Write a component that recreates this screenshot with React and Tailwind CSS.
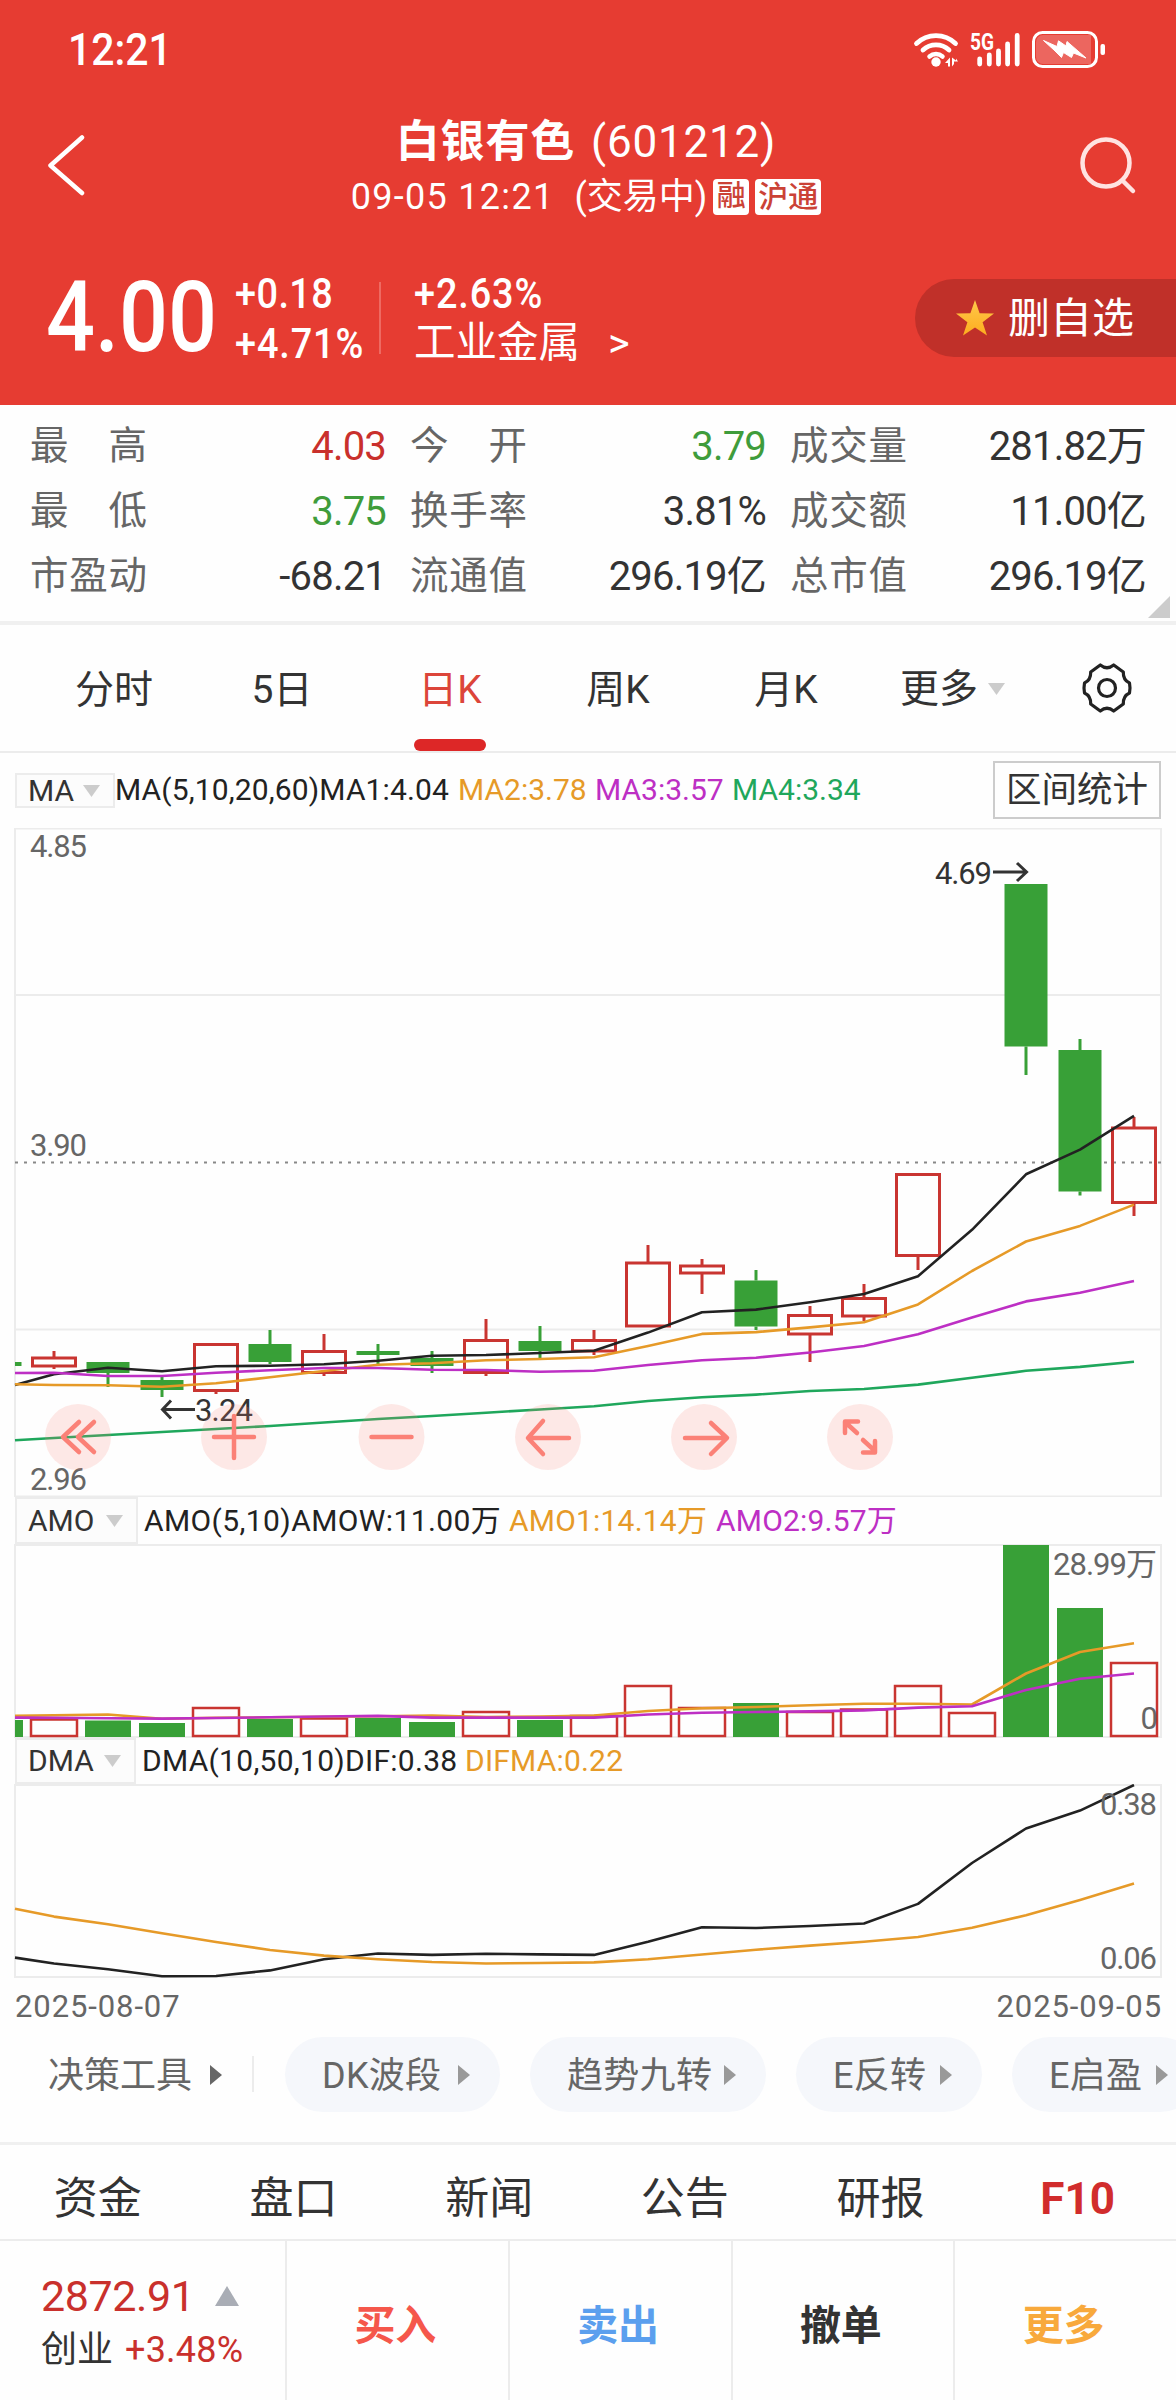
import React from "react";

const GREEN = "#38a037";
const RED = "#c93531";

// [open/close top, open/close bottom, high, low, direction]
const candles = [
  [1358, 1366, 1351, 1369, "up"],
  [1362, 1373, 1362, 1387, "down"],
  [1380, 1390, 1377, 1397, "down"],
  [1344.5, 1390.5, 1344, 1394, "up"],
  [1344, 1362, 1330, 1364, "down"],
  [1351.5, 1372.5, 1334, 1376, "up"],
  [1351, 1355, 1344, 1365, "down"],
  [1358, 1366, 1351, 1373, "down"],
  [1340.5, 1372.5, 1319, 1376, "up"],
  [1341, 1351, 1326, 1358, "down"],
  [1340.5, 1351, 1330, 1355, "up"],
  [1263, 1326, 1245, 1326, "up"],
  [1266, 1273, 1259, 1294, "up"],
  [1280.5, 1326.5, 1270, 1330, "down"],
  [1315.5, 1334, 1306, 1362, "up"],
  [1298.5, 1316, 1284, 1321, "up"],
  [1174.5, 1255.5, 1174, 1270, "up"],
  [1036, 1036, 1036, 1036, "up"],
  [884, 1046.5, 884, 1075, "down"],
  [1050, 1191.5, 1039, 1195.5, "down"],
  [1128, 1202.5, 1117, 1216, "up"],
];

const amounts = [
  1719.5, 1720.5, 1723, 1708, 1719, 1718.5, 1718, 1722, 1712, 1720, 1716, 1686,
  1708, 1703, 1712, 1709.5, 1686, 1713, 1545, 1608, 1663,
];

const ma1 = [
  1385, 1374.3, 1367.7, 1371.3, 1366.3, 1365.7, 1364.3, 1360.7, 1355.7, 1355,
  1353, 1350.8, 1332.6, 1312.2, 1309.6, 1302.2, 1294, 1276.2, 1229.8, 1174.3,
  1149.6, 1115.8,
];
const ma2 = [
  1384.3, 1385, 1385.3, 1386.7, 1383.3, 1377.3, 1371, 1364.7, 1363.3, 1360.3,
  1359, 1357.3, 1346, 1333.9, 1332.1, 1327.4, 1322.2, 1304.4, 1271, 1241.5,
  1225.9, 1204.6,
];
const ma3 = [
  1373, 1372.7, 1376, 1376, 1372.7, 1370.3, 1368, 1368, 1369.7, 1370, 1371.7,
  1370.8, 1365, 1360.3, 1357.7, 1352.5, 1346, 1334.3, 1317.4, 1301.4, 1292.7,
  1281,
];
const ma4 = [
  1440.3, 1438, 1435, 1432, 1429, 1426, 1422.5, 1419, 1416, 1412.7, 1409.5,
  1406.3, 1401, 1397.2, 1394.6, 1391, 1389, 1384.6, 1377.7, 1370.8, 1366.9,
  1361.7,
];
const amo1 = [
  1715.9, 1715.2, 1714.5, 1718.7, 1717.8, 1717.3, 1716.8, 1716.2, 1715.5, 1717,
  1716.5, 1715.5, 1711, 1708.3, 1707, 1705.2, 1703.8, 1703.8, 1704.5, 1673.5,
  1652, 1643.2,
];
const amo2 = [
  1717.6, 1717.8, 1718.2, 1718.6, 1718, 1717.3, 1716.5, 1715.9, 1717.6, 1717.6,
  1717.6, 1717.6, 1714.5, 1712.8, 1712, 1711.4, 1710.4, 1707.6, 1706.2, 1690,
  1678.7, 1673.5,
];
const dif = [
  1957.6, 1963.5, 1969.3, 1976.2, 1976, 1970.4, 1959.3, 1953.5, 1954.9, 1953.8,
  1954.4, 1954.9, 1941.8, 1927.3, 1928, 1926, 1923.5, 1903.9, 1863, 1828.5,
  1810.6, 1785,
];
const difma = [
  1908.7, 1916.6, 1924.2, 1933.2, 1942, 1950, 1955.6, 1959.3, 1962, 1963.5,
  1963, 1962.4, 1959.3, 1954.5, 1949.7, 1945.6, 1941.8, 1937, 1927.7, 1915.3,
  1900, 1883.6,
];

const Line = ({ data, color }) => (
  <polyline
    points={data.map((y, i) => `${i === 0 ? 15 : i * 54},${y}`).join(" ")}
    fill="none"
    stroke={color}
    strokeWidth="2.6"
    strokeLinejoin="round"
  />
);

const Label = ({ x, y, width, anchor = "start", color = "#666", children }) => (
  <text
    x={x}
    y={y}
    fill={color}
    fontSize="31"
    textAnchor={anchor}
    textLength={width}
  >
    {children}
  </text>
);

const StatusBar = () => (
  <div className="flex h-[100px] items-center justify-between pl-[68px] pr-[70px]">
    <span className="origin-left scale-x-[0.93] text-[44px] leading-none font-medium">
      12:21
    </span>
    <svg width="194" height="40" viewBox="912 30 194 40" fill="none">
      <g stroke="#fff" strokeWidth="4.800" strokeLinecap="round">
        <path d="M916.500 43.500a28 28 0 0 1 39 0" />
        <path d="M923 50a19 19 0 0 1 26 0" />
        <path d="M929.500 56.500a10 10 0 0 1 13 0" strokeWidth="4.500" />
        <path d="M979.700 59v5M989.300 55v9M998.500 51v13M1007.600 44v20M1017.200 35.500v28.500" />
      </g>
      <circle cx="936" cy="62" r="4.700" fill="#fff" />
      <path
        d="M950 57.500v9h-2v-3.500h-3zM952 57.500v9l2-2.500v-2.500h4l-2-3v2z"
        fill="#fff"
      />
      <text
        x="970"
        y="50"
        fill="#fff"
        fontSize="23"
        fontWeight="700"
        textLength="24"
        lengthAdjust="spacingAndGlyphs"
      >
        5G
      </text>
      <rect
        x="1033.500"
        y="32.500"
        width="63"
        height="34"
        rx="9"
        stroke="#fff"
        strokeWidth="3"
      />
      <path
        d="M1043 35h48v29h-48a7 7 0 0 1-7-7v-15a7 7 0 0 1 7-7z"
        fill="#ec665f"
      />
      <path
        d="M1043.500 40.500L1057 46.500L1058.500 40.800L1066 46L1067 41.500L1086 58L1073.500 53L1071.500 57.500L1063.500 52.500L1061.500 57.500L1054 50z"
        fill="#fff"
        stroke="#fff"
        strokeLinejoin="round"
      />
      <rect x="1100.500" y="44" width="4.500" height="11" rx="2" fill="#fff" />
    </svg>
  </div>
);

const TitleBar = () => (
  <div className="flex h-[130px] items-center justify-between pl-[46px] pr-[38px]">
    <svg width="44" height="62" viewBox="46 134 44 62" fill="none">
      <path
        d="M82 137.500L50.500 165.500l31.500 27.500"
        stroke="#fff"
        strokeWidth="4.500"
        strokeLinecap="round"
        strokeLinejoin="round"
      />
    </svg>
    <div className="flex flex-col items-center pl-[4px]">
      <h1 className="mt-px flex h-[60px] items-center gap-[16px] text-[44px] leading-none">
        <span className="tracking-[0.8px] font-bold">白银有色</span>
        <span className="tracking-[0.8px]">(601212)</span>
      </h1>
      <div className="flex h-[48px] items-center pt-[2px] text-[36px] leading-none">
        <span className="mr-[20px] tracking-[1.3px]">09-05 12:21</span>
        <span>(交易中)</span>
        <span className="ml-[6px] flex h-[36px] w-[36px] items-center justify-center rounded-[4px] bg-white text-[29px] font-medium text-[#cb4236]">
          融
        </span>
        <span className="ml-[6px] flex h-[36px] w-[66px] items-center justify-center rounded-[4px] bg-white text-[30px] font-medium text-[#cb4236]">
          沪通
        </span>
      </div>
    </div>
    <svg width="60" height="60" viewBox="1078 135 60 60" fill="none">
      <g stroke="#ffe3e1" strokeWidth="4.500" strokeLinecap="round">
        <circle cx="1106" cy="163" r="23.500" />
        <path d="M1123 181l10 10" />
      </g>
    </svg>
  </div>
);

const PriceBar = () => (
  <div className="flex h-[175px] items-center pt-[1px]">
    <span className="ml-[46px] w-[189px] origin-left scale-x-[0.88] text-[98px] leading-none font-medium">
      4.00
    </span>
    <div className="flex w-[144px] flex-col text-[43px] leading-[50px] font-medium">
      <span className="origin-left scale-x-[0.88] tracking-[0.5px]">+0.18</span>
      <span className="origin-left scale-x-[0.88] tracking-[1px]">+4.71%</span>
    </div>
    <div className="h-[72px] w-[2px] bg-[#ee6a62]" />
    <div className="ml-[33px] flex w-[501px] flex-col text-[43px] leading-[50px]">
      <span className="origin-left scale-x-[0.88] tracking-[1px] font-medium">
        +2.63%
      </span>
      <span className="flex items-center text-[41.500px]">
        工业金属<span className="ml-[28px]">&gt;</span>
      </span>
    </div>
    <button className="flex h-[78px] flex-1 items-center rounded-l-full bg-[#c03029] pl-[41px] text-[42px] leading-none">
      <svg width="38" height="36" viewBox="0 0 38 36" className="mr-[14px]">
        <defs>
          <linearGradient id="star" x1="0" y1="0" x2="0" y2="1">
            <stop offset="0" stopColor="#ffc94a" />
            <stop offset="1" stopColor="#fdac1f" />
          </linearGradient>
        </defs>
        <path
          d="M19 0l4.600 13.300L38 13.600 26.600 22.200 31 35.500 19 27.600 7 35.500l4.400-13.300L0 13.600l14.400-.3z"
          fill="url(#star)"
        />
      </svg>
      <span className="pt-[2px] whitespace-nowrap">删自选</span>
    </button>
  </div>
);

const stats = [
  { label: "最高", value: "4.03", color: "text-[#c9302c]" },
  { label: "今开", value: "3.79", color: "text-[#3f9c3b]" },
  { label: "成交量", value: "281.82万", color: "text-[#333]" },
  { label: "最低", value: "3.75", color: "text-[#3f9c3b]" },
  { label: "换手率", value: "3.81%", color: "text-[#333]" },
  { label: "成交额", value: "11.00亿", color: "text-[#333]" },
  { label: "市盈动", value: "-68.21", color: "text-[#333]" },
  { label: "流通值", value: "296.19亿", color: "text-[#333]" },
  { label: "总市值", value: "296.19亿", color: "text-[#333]" },
];

const Stats = () => (
  <div className="relative h-[220px] border-b-4 border-[#f0f0f0] pt-[9px] pr-[30px] pl-[30px]">
    <div className="grid grid-cols-3 gap-x-[24px]">
      {stats.map((s) => (
        <div
          key={s.label}
          className="flex h-[65px] items-center justify-between leading-none"
        >
          <span className="flex w-[117px] justify-between text-[38.500px] text-[#666]">
            {s.label.split("").map((c) => (
              <span key={c}>{c}</span>
            ))}
          </span>
          <span className={`text-[40px] tracking-[-0.8px] ${s.color}`}>
            {s.value}
          </span>
        </div>
      ))}
    </div>
    <svg
      className="absolute right-[6px] bottom-[3px]"
      width="22"
      height="22"
      viewBox="0 0 22 22"
    >
      <path d="M22 0v22H0z" fill="#ccc" />
    </svg>
  </div>
);

const Triangle = () => (
  <svg width="17" height="12" viewBox="0 0 17 12">
    <path d="M0 0h17L8.500 12z" fill="#ccc" />
  </svg>
);

const PeriodTabs = () => (
  <div className="flex h-[128px] border-b-2 border-[#ececec] pl-[30px] text-[39px] leading-none text-[#333]">
    {["分时", "5日", "日K", "周K", "月K"].map((tab) => (
      <div
        key={tab}
        className={`flex w-[168px] flex-col items-center justify-end ${
          tab === "日K" ? "text-[#dc453a]" : ""
        }`}
      >
        <span className="mb-[29px]">{tab}</span>
        <span
          className={`h-[12px] w-[72px] rounded-full ${
            tab === "日K" ? "bg-[#dd2727]" : ""
          }`}
        />
      </div>
    ))}
    <div className="flex w-[168px] items-center gap-[10px] pt-[2px] pl-[30px]">
      更多 <Triangle />
    </div>
    <div className="flex flex-1 items-center pl-[43px]">
      <svg width="52" height="52" viewBox="-26 -26 52 52" fill="none">
        <g stroke="#222" strokeWidth="3.200" strokeLinejoin="round">
          <path d="M-6.700-23Q0-17.500 6.700-23L16.300-16Q16-8 22.500-5Q23.500 0 22.500 5Q16 8 16.300 16L6.700 23Q0 17.500-6.700 23L-16.300 16Q-16 8-22.500 5Q-23.500 0-22.500-5Q-16-8-16.300-16z" />
          <circle r="8.500" />
        </g>
      </svg>
    </div>
  </div>
);

const IndicatorSelect = ({ name, className }) => (
  <div
    className={`flex items-center justify-between border-2 border-[#ececec] bg-[#fcfcfc] pr-[13px] pl-[11px] text-[30px] leading-none text-[#333] ${className}`}
  >
    {name} <Triangle />
  </div>
);

const controls = [
  { x: 78, d: "M1-15L-15 0L1 15M16-15L0 0L16 15" },
  { x: 234, d: "M-20 0H20M0-21V21" },
  { x: 391.5, d: "M-20 0H20" },
  { x: 548, d: "M21 1H-19M-5-16L-20 1L-5 17" },
  { x: 704, d: "M-19 1H22M7-14L23 1L7 17" },
  { x: 860, d: "M-3-4L-15-15M-2-15.500H-15V-4M3 3L15 14M15 4V15.500H3" },
];

const KChart = () => (
  <svg
    className="block"
    width="1176"
    height="669"
    viewBox="0 828 1176 669"
    fill="none"
  >
    <rect x="15" y="828.500" width="1146" height="668" stroke="#ececec" strokeWidth="2" />
    <path d="M15 995H1161M15 1329.500H1161" stroke="#ececec" strokeWidth="2" />
    <path d="M15 1162.500H1161" stroke="#888" strokeWidth="2" strokeDasharray="3 6" />
    <Label x="30" y="857" width="57">4.85</Label>
    <Label x="30" y="1156" width="57">3.90</Label>
    <Label x="30" y="1490" width="57">2.96</Label>

    <rect x="15" y="1362" width="6.500" height="4" fill={GREEN} />
    {candles.map(([top, bottom, high, low, dir], i) => {
      const x = (i + 1) * 54;
      const color = dir === "up" ? RED : GREEN;
      return (
        <g key={x} stroke={color} strokeWidth="3">
          <path d={`M${x} ${high}V${top}M${x} ${bottom}V${low}`} />
          {dir === "up" ? (
            <rect x={x - 21.5} y={top} width="43" height={bottom - top} />
          ) : (
            <rect
              x={x - 21.5}
              y={top}
              width="43"
              height={bottom - top}
              fill={GREEN}
              stroke="none"
            />
          )}
        </g>
      );
    })}
    <Line data={ma4} color="#1fa75c" />
    <Line data={ma1} color="#222" />
    <Line data={ma2} color="#e69a28" />
    <Line data={ma3} color="#bd2fc4" />

    <g stroke="#333" strokeWidth="3">
      <path d="M993 872H1026M1017 863L1026.500 872L1017 881" />
      <path d="M195 1409.500H163M171 1400.500L162.500 1409.500L171 1418.500" />
    </g>
    <Label x="935" y="884" width="57" color="#333">4.69</Label>
    <Label x="195" y="1421" width="58" color="#333">3.24</Label>

    {controls.map((c) => (
      <g key={c.x} transform={`translate(${c.x} 1437)`}>
        <circle r="33" fill="#f88379" fillOpacity="0.18" />
        <path
          d={c.d}
          stroke="#fb8177"
          strokeWidth="4.500"
          strokeLinecap="round"
          strokeLinejoin="round"
        />
      </g>
    ))}
  </svg>
);

const AmoChart = () => (
  <svg
    className="block"
    width="1176"
    height="194"
    viewBox="0 1544 1176 194"
    fill="none"
  >
    <rect x="15" y="1545" width="1146" height="192" stroke="#ececec" strokeWidth="2" />
    <rect x="15" y="1720" width="8" height="17" fill={GREEN} />
    {amounts.map((y, i) => {
      const x = (i + 1) * 54;
      return candles[i][4] === "up" ? (
        <rect
          key={x}
          x={x - 23}
          y={y}
          width="46"
          height={1736 - y}
          stroke={RED}
          strokeWidth="2.500"
        />
      ) : (
        <rect key={x} x={x - 23} y={y} width="46" height={1737 - y} fill={GREEN} />
      );
    })}
    <Line data={amo1} color="#e69a28" />
    <Line data={amo2} color="#bd2fc4" />
    <Label x="1053" y="1575" width="104">28.99万</Label>
    <Label x="1158" y="1729" anchor="end">0</Label>
  </svg>
);

const DmaChart = () => (
  <svg
    className="block"
    width="1176"
    height="194"
    viewBox="0 1784 1176 194"
    fill="none"
  >
    <rect x="15" y="1785" width="1146" height="192" stroke="#ececec" strokeWidth="2" />
    <Line data={dif} color="#222" />
    <Line data={difma} color="#e69a28" />
    <Label x="1100" y="1815" width="57">0.38</Label>
    <Label x="1100" y="1969" width="57">0.06</Label>
  </svg>
);

const Charts = () => (
  <div className="text-[30px] leading-none whitespace-nowrap">
    <div className="flex h-[75px] items-center pr-[15px] pb-[2px] pl-[15px]">
      <IndicatorSelect name="MA" className="mt-[2px] h-[35px] w-[100px]" />
      <span className="w-[343px] tracking-[0.13px] text-[#222]">
        MA(5,10,20,60)MA1:4.04
      </span>
      <span className="w-[137px] text-[#e69a28]">MA2:3.78</span>
      <span className="w-[137px] text-[#bd2fc4]">MA3:3.57</span>
      <span className="text-[#1fa75c]">MA4:3.34</span>
      <span className="ml-auto flex h-[58px] w-[168px] items-center justify-center border-2 border-[#ccc] pt-[3px] text-[35.500px] text-[#333]">
        区间统计
      </span>
    </div>
    <KChart />
    <div className="flex h-[47px] items-center pl-[15px]">
      <IndicatorSelect name="AMO" className="h-[47px] w-[123px]" />
      <span className="ml-[6px] w-[365px] tracking-[0.4px] text-[#222]">
        AMO(5,10)AMOW:11.00万
      </span>
      <span className="w-[207px] tracking-[0.2px] text-[#e69a28]">
        AMO1:14.14万
      </span>
      <span className="tracking-[0.2px] text-[#bd2fc4]">AMO2:9.57万</span>
    </div>
    <AmoChart />
    <div className="flex h-[46px] items-center pl-[15px]">
      <IndicatorSelect name="DMA" className="h-[46px] w-[121px]" />
      <span className="ml-[6px] w-[323px] tracking-[0.28px] text-[#222]">
        DMA(10,50,10)DIF:0.38
      </span>
      <span className="tracking-[0.2px] text-[#e69a28]">DIFMA:0.22</span>
    </div>
    <DmaChart />
    <div className="flex h-[59px] items-center justify-between pr-[14px] pb-[2px] pl-[15px] text-[31px] tracking-[0.9px] text-[#666]">
      <span>2025-08-07</span>
      <span>2025-09-05</span>
    </div>
  </div>
);

const Arrow = ({ color }) => (
  <svg width="12" height="20" viewBox="0 0 12 20" className="shrink-0">
    <path d="M0 0L12 10L0 20z" fill={color} />
  </svg>
);

const tools = [
  { name: "DK波段", width: "w-[215px]" },
  { name: "趋势九转", width: "w-[236px]" },
  { name: "E反转", width: "w-[186px]" },
  { name: "E启盈", width: "w-[186px]" },
];

const Tools = () => (
  <div className="flex h-[108px] items-start overflow-hidden border-b-[3px] border-[#f0f0f0] text-[36px] leading-none whitespace-nowrap text-[#666]">
    <div className="ml-[48px] flex h-[75px] w-[204px] shrink-0 items-center gap-[18px]">
      <span className="pt-[3px]">决策工具</span> <Arrow color="#666" />
    </div>
    <div className="mt-[19px] h-[36px] w-[2px] shrink-0 bg-[#ececec]" />
    <div className="ml-[31px] flex gap-[30px]">
      {tools.map((tool) => (
        <div
          key={tool.name}
          className={`flex h-[75px] shrink-0 items-center justify-between rounded-full bg-[#f5f7fb] pr-[30px] pl-[37px] ${tool.width}`}
        >
          <span className="pt-[3px] tracking-[0.3px]">{tool.name}</span>
          <Arrow color="#999" />
        </div>
      ))}
    </div>
  </div>
);

const InfoTabs = () => (
  <div className="grid h-[96px] grid-cols-6 items-center border-b-2 border-[#ececec] pt-[14px] pr-[2px] text-center text-[44px] leading-none text-[#333]">
    {["资金", "盘口", "新闻", "公告", "研报"].map((tab) => (
      <span key={tab}>{tab}</span>
    ))}
    <span className="pl-[3px] font-bold text-[#d12c2c]">F10</span>
  </div>
);

const actions = [
  { label: "买入", color: "text-[#f5574b]" },
  { label: "卖出", color: "text-[#5b9fee]" },
  { label: "撤单", color: "text-[#333]" },
  { label: "更多", color: "text-[#f8a93c]" },
];

const BottomBar = () => (
  <div className="flex h-[159px] leading-none">
    <div className="flex w-[285px] flex-col pt-[30px] pl-[41px]">
      <div className="flex h-[50px] items-center gap-[20px] text-[43px] tracking-[-0.4px] text-[#c9302c]">
        2872.91
        <svg width="24" height="20" viewBox="0 0 24 20">
          <path d="M12 0l12 20H0z" fill="#a9adb5" />
        </svg>
      </div>
      <div className="flex h-[58px] items-center gap-[12px] text-[36px] text-[#333]">
        创业{" "}
        <span className="tracking-[0.2px] text-[#c9302c]">+3.48%</span>
      </div>
    </div>
    {actions.map((a) => (
      <button
        key={a.label}
        className={`flex flex-1 items-center justify-center border-l-2 border-[#ececec] pt-[11px] pr-[4px] text-[41px] font-bold ${a.color}`}
      >
        {a.label}
      </button>
    ))}
  </div>
);

export default function App() {
  return (
    <div className="h-[2400px] w-[1176px] overflow-hidden bg-[#fefefe] font-[Roboto,'Noto_Sans_CJK_SC',sans-serif]">
      <header className="h-[405px] bg-[#e63c32] text-white">
        <StatusBar />
        <TitleBar />
        <PriceBar />
      </header>
      <Stats />
      <PeriodTabs />
      <Charts />
      <Tools />
      <InfoTabs />
      <BottomBar />
    </div>
  );
}
